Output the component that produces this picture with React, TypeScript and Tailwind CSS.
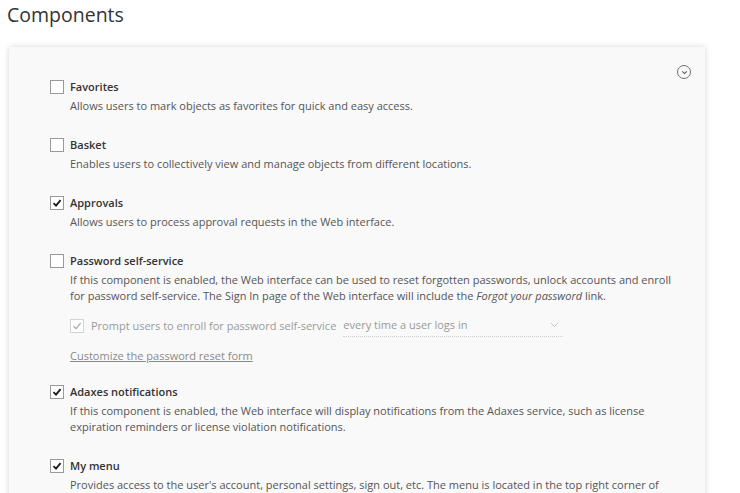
import type { ReactNode } from "react";

const font = { fontFamily: '"Open Sans", "Noto Sans", sans-serif' };

function Check({ checked, disabled }: { checked?: boolean; disabled?: boolean }) {
  return (
    <span
      className={`flex h-[14px] w-[14px] shrink-0 items-center justify-center border bg-white ${
        disabled ? "border-[#d4d4d4]" : "border-[#9a9a9a]"
      }`}
    >
      {checked && (
        <svg width="10" height="10" viewBox="0 0 10 10">
          <path
            d="M1.5 5.2 L4 7.6 L8.6 2.2"
            fill="none"
            stroke={disabled ? "#a8a8a8" : "#1a1a1a"}
            strokeWidth={disabled ? 1.2 : 1.8}
          />
        </svg>
      )}
    </span>
  );
}

function Item({
  label,
  checked,
  children,
  extra,
}: {
  label: string;
  checked?: boolean;
  children: ReactNode;
  extra?: ReactNode;
}) {
  return (
    <div className="flex gap-[6px]">
      <div className="pt-[2px]">
        <Check checked={checked} />
      </div>
      <div className="flex-1">
        <div className="text-[11px] font-semibold leading-[18px] text-[#333]">{label}</div>
        <div className="mt-[2px] text-[11px] leading-[16px] text-[#555]">{children}</div>
        {extra}
      </div>
    </div>
  );
}

export default function App() {
  return (
    <div className="min-h-screen overflow-hidden bg-white" style={font}>
      <h1 className="pl-[7px] pt-[2px] text-[19.5px] font-normal leading-[26px] text-[#333]">
        Components
      </h1>

      <div className="relative ml-[9px] mt-[19px] w-[696px] bg-[#f9f9f9] pl-[41px] pr-[30px] pt-[31px] pb-[40px] shadow-[0_0_6px_rgba(0,0,0,0.16)]">
        <button className="absolute right-[14px] top-[18px] flex h-[14px] w-[14px] items-center justify-center rounded-full border border-[#707070]">
          <svg width="7" height="5" viewBox="0 0 7 5">
            <path d="M1.2 1.4 L3.5 3.6 L5.8 1.4" fill="none" stroke="#555" strokeWidth="1.1" />
          </svg>
        </button>

        <div className="flex flex-col gap-[22px]">
          <Item label="Favorites">
            Allows users to mark objects as favorites for quick and easy access.
          </Item>
          <Item label="Basket">
            Enables users to collectively view and manage objects from different locations.
          </Item>
          <Item label="Approvals" checked>
            Allows users to process approval requests in the Web interface.
          </Item>
          <Item
            label="Password self-service"
            extra={
              <div className="mb-[-3px] mt-[11px]">
                <div className="flex items-center gap-[7px]">
                  <Check checked disabled />
                  <span className="text-[11px] leading-[16px] text-[#9a9a9a]">
                    Prompt users to enroll for password self-service
                  </span>
                  <div className="flex w-[220px] items-center justify-between border-b border-dotted border-[#cfcfcf] pb-[3px] pt-[2px]">
                    <span className="text-[11px] leading-[16px] text-[#9a9a9a]">
                      every time a user logs in
                    </span>
                    <svg width="9" height="6" viewBox="0 0 9 6" className="mr-[4px]">
                      <path d="M1 1 L4.5 4.5 L8 1" fill="none" stroke="#c4c4c4" strokeWidth="1" />
                    </svg>
                  </div>
                </div>
                <div className="mt-[11px] text-[11px] leading-[16px] text-[#8a8a8a] underline">
                  Customize the password reset form
                </div>
              </div>
            }
          >
            If this component is enabled, the Web interface can be used to reset forgotten passwords, unlock accounts and enroll
            for password self-service. The Sign In page of the Web interface will include the{" "}
            <span className="italic">Forgot your password</span> link.
          </Item>
          <Item label="Adaxes notifications" checked>
            If this component is enabled, the Web interface will display notifications from the Adaxes service, such as license
            expiration reminders or license violation notifications.
          </Item>
          <Item label="My menu" checked>
            Provides access to the user's account, personal settings, sign out, etc. The menu is located in the top right corner of
            the Web interface.
          </Item>
        </div>
      </div>
    </div>
  );
}
